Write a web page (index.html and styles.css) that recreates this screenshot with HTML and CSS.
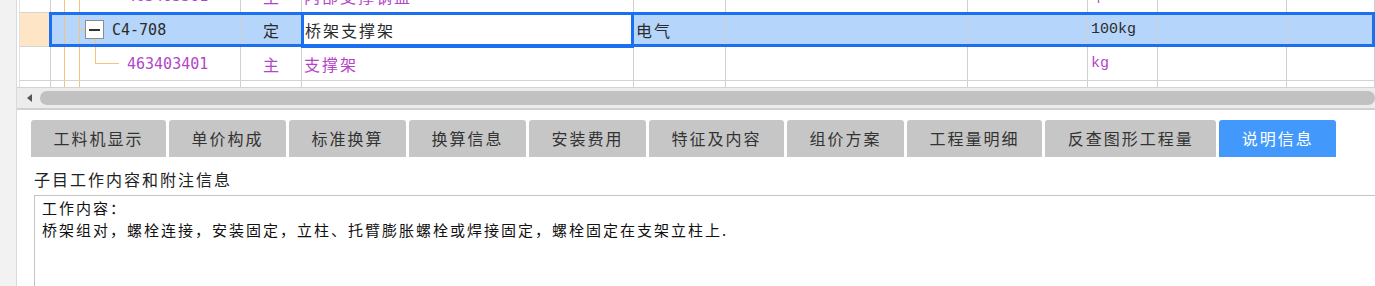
FILE: index.html
```html
<!DOCTYPE html>
<html lang="zh-CN">
<head>
    <meta charset="UTF-8">
    <meta name="viewport" content="width=device-width, initial-scale=1.0">
    <title>子目说明信息</title>
    <link rel="stylesheet" href="styles.css">
</head>
<body>

<div class="app">
    <div class="gutter"></div>

    <div class="main">
        <!-- Grille des sous-postes -->
        <div class="grid">
            <div class="rows">
                <div class="row">
                    <div class="c num"></div>
                    <div class="c tree"><span class="code sub">463403301</span></div>
                    <div class="c type sub">主</div>
                    <div class="c txt sub">内部支撑钢盘</div>
                    <div class="c"></div>
                    <div class="c"></div>
                    <div class="c"></div>
                    <div class="c unit sub">个</div>
                    <div class="c"></div>
                    <div class="c"></div>
                </div>

                <div class="row sel">
                    <div class="c num"></div>
                    <div class="c tree parent">
                        <span class="toggle"></span>
                        <span class="code">C4-708</span>
                    </div>
                    <div class="c type">定</div>
                    <div class="c txt edit">桥架支撑架</div>
                    <div class="c txt">电气</div>
                    <div class="c"></div>
                    <div class="c"></div>
                    <div class="c unit">100kg</div>
                    <div class="c"></div>
                    <div class="c"></div>
                </div>

                <div class="row">
                    <div class="c num"></div>
                    <div class="c tree child"><span class="code sub">463403401</span></div>
                    <div class="c type sub">主</div>
                    <div class="c txt sub">支撑架</div>
                    <div class="c"></div>
                    <div class="c"></div>
                    <div class="c"></div>
                    <div class="c unit sub">kg</div>
                    <div class="c"></div>
                    <div class="c"></div>
                </div>

                <div class="row">
                    <div class="c num"></div>
                    <div class="c tree"></div>
                    <div class="c"></div>
                    <div class="c"></div>
                    <div class="c"></div>
                    <div class="c"></div>
                    <div class="c"></div>
                    <div class="c"></div>
                    <div class="c"></div>
                    <div class="c"></div>
                </div>
            </div>
        </div>

        <div class="hscroll">
            <span class="arrow"></span>
            <span class="thumb"></span>
        </div>

        <!-- Onglets -->
        <div class="tabs">
            <div class="tab">工料机显示</div>
            <div class="tab">单价构成</div>
            <div class="tab">标准换算</div>
            <div class="tab">换算信息</div>
            <div class="tab">安装费用</div>
            <div class="tab">特征及内容</div>
            <div class="tab">组价方案</div>
            <div class="tab">工程量明细</div>
            <div class="tab">反查图形工程量</div>
            <div class="tab active">说明信息</div>
        </div>

        <div class="detail">
            <div class="detail-title">子目工作内容和附注信息</div>
            <div class="detail-box">
                <p>工作内容：</p>
                <p>桥架组对，螺栓连接，安装固定，立柱、托臂膨胀螺栓或焊接固定，螺栓固定在支架立柱上.</p>
            </div>
        </div>
    </div>
</div>

</body>
</html>
```

FILE: styles.css
```css
body {
    margin: 0;
    background-color: #ffffff;
    font-family: "Noto Sans CJK SC", "Liberation Sans", sans-serif;
    color: #333;
    overflow: hidden;
}

.app {
    display: flex;
    height: 286px;
}
.gutter {
    width: 16px;
    flex: none;
    background-color: #f2f2f2;
    border-right: 1px solid #dadada;
}
.main {
    flex: 1;
    min-width: 0;
}

/* grille */
.grid {
    height: 87px;
    overflow: hidden;
    padding-left: 2px;
    border-bottom: 1px solid #d2d2d2;
}
.rows {
    margin-top: -21px;
}
.row {
    --ln: linear-gradient(#f6c27e, #f6c27e);
    position: relative;
    display: grid;
    grid-template-columns: 32px 190px 61px 332px 92px 242px 120px 70px 129px 1fr;
    height: 34px;
    border-bottom: 1px solid #d4d4d4;
    box-sizing: border-box;
}
.c {
    position: relative;
    display: flex;
    align-items: center;
    border-right: 1px solid #d0d0d0;
    box-sizing: border-box;
    font-size: 16px;
    letter-spacing: 2px;
    color: #2b2b2b;
    white-space: nowrap;
    overflow: hidden;
}
.num {
    border-left: 1px solid #e2e2e2;
}
.type {
    justify-content: center;
    padding-left: 2px;
}
.txt {
    padding-left: 2px;
}
.unit {
    padding-left: 3px;
    font-family: "Liberation Mono", monospace;
    font-size: 15px;
    letter-spacing: 0;
}
.sub {
    color: #b445c8;
}

/* arbre */
.tree {
    padding-left: 76px;
    background-image: var(--ln), var(--ln);
    background-size: 1px 100%, 1px 100%;
    background-position: 13px 0, 28px 0;
    background-repeat: no-repeat;
}
.tree.parent {
    padding-left: 34px;
    gap: 8px;
    background-image: var(--ln), var(--ln), var(--ln), var(--ln);
    background-size: 1px 100%, 1px 100%, 7px 1px, 1px 100%;
    background-position: 13px 0, 28px 0, 28px 16px, 44px 25px;
}
.tree.child {
    background-image: var(--ln), var(--ln), var(--ln), var(--ln);
    background-size: 1px 100%, 1px 100%, 1px 17px, 24px 1px;
    background-position: 13px 0, 28px 0, 44px 0, 44px 16px;
}
.code {
    font-family: "DejaVu Sans Mono", monospace;
    font-size: 15px;
    letter-spacing: 0;
}
.toggle {
    position: relative;
    width: 19px;
    height: 19px;
    box-sizing: border-box;
    border: 1px solid #8c8c8c;
    background-color: #fff;
}
.toggle::before {
    content: "";
    position: absolute;
    left: 3px;
    right: 3px;
    top: 8px;
    height: 2px;
    background-color: #333;
}

/* ligne sélectionnée */
.row.sel .c {
    background-color: #b6d5fb;
}
.row.sel .num {
    background-color: #fde5c6;
}
.row.sel .edit {
    background-color: #fff;
    padding-left: 3px;
    overflow: visible;
}
.row.sel::after {
    content: "";
    position: absolute;
    left: 30px;
    right: 0;
    top: -1px;
    bottom: -1px;
    border: 3px solid #1b6ff0;
    pointer-events: none;
}
.row.sel .edit::after {
    content: "";
    position: absolute;
    left: -1px;
    right: -1px;
    top: -1px;
    bottom: -2px;
    border: 3px solid #1b6ff0;
    z-index: 1;
}

/* barre de défilement */
.hscroll {
    display: flex;
    align-items: center;
    height: 20px;
    padding-left: 10px;
    background-color: #ececec;
    border-bottom: 2px solid #d0d0d0;
}
.arrow {
    width: 0;
    height: 0;
    border-top: 4px solid transparent;
    border-bottom: 4px solid transparent;
    border-right: 5px solid #555;
}
.thumb {
    flex: 1;
    height: 14px;
    margin-left: 8px;
    border-radius: 7px;
    background-color: #c1c1c1;
}

/* onglets */
.tabs {
    display: flex;
    gap: 3px;
    margin-top: 10px;
    padding-left: 14px;
}
.tab {
    height: 37px;
    line-height: 37px;
    padding: 0 22.5px;
    background-color: #c6c6c6;
    border-radius: 3px 3px 0 0;
    font-size: 16px;
    letter-spacing: 2px;
    color: #333;
    white-space: nowrap;
}
.tab.active {
    background-color: #4399fb;
    color: #fff;
}

/* détail */
.detail {
    padding-left: 17px;
}
.detail-title {
    margin-top: 10px;
    line-height: 24px;
    font-size: 16px;
    letter-spacing: 2px;
    color: #222;
}
.detail-box {
    margin-top: 4px;
    height: 120px;
    padding: 1px 7px;
    border-top: 1px solid #c4c4c4;
    border-left: 1px solid #c4c4c4;
    font-size: 15px;
    letter-spacing: 2px;
    line-height: 22px;
    color: #111;
}
.detail-box p {
    margin: 0;
}
```
